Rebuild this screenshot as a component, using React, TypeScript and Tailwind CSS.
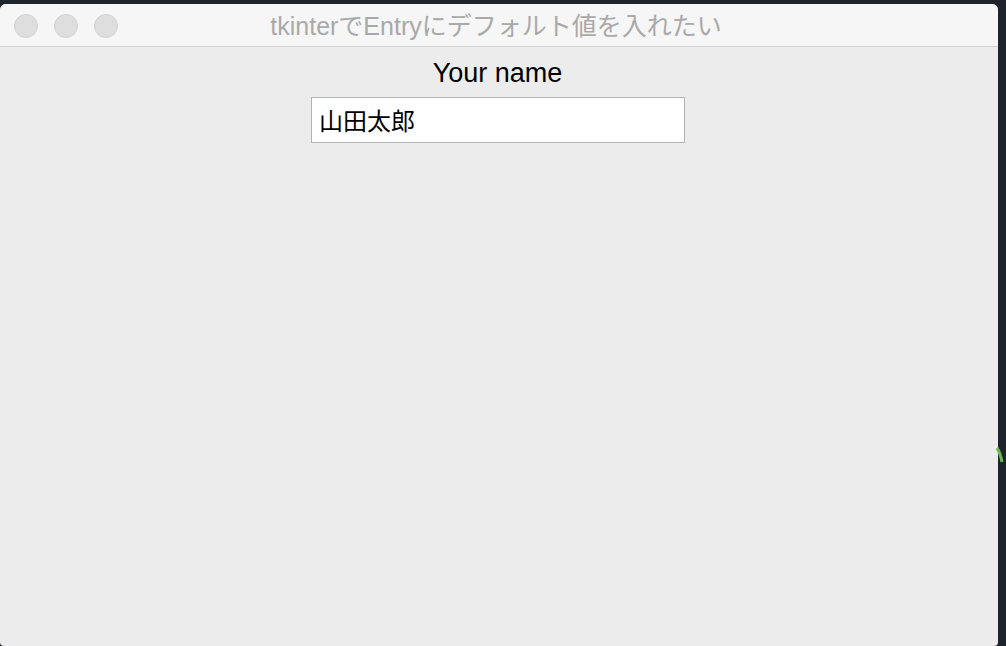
import React from "react";

export default function App() {
  return (
    <div className="relative w-[1006px] h-[646px] bg-[#1f232b] overflow-hidden pt-[4px]">
      <div className="w-[998px] h-[642px] bg-[#ececec] rounded-t-[6px] rounded-b-[4px] overflow-hidden flex flex-col">
        <div className="relative h-[43px] bg-[#f6f6f6] border-b border-[#d1d1d1] flex items-center justify-center shrink-0">
          <div className="absolute left-[14px] top-[10px] flex gap-[16px]">
            <div className="w-[24px] h-[24px] rounded-full bg-[#dedede] border border-[#d2d2d2]" />
            <div className="w-[24px] h-[24px] rounded-full bg-[#dedede] border border-[#d2d2d2]" />
            <div className="w-[24px] h-[24px] rounded-full bg-[#dedede] border border-[#d2d2d2]" />
          </div>
          <span
            className="text-[25px] text-[#a9a9a9] leading-none ml-[-6px] mt-[2px]"
            style={{ fontFamily: '"Liberation Sans", "Noto Sans CJK JP", sans-serif' }}
          >
            tkinterでEntryにデフォルト値を入れたい
          </span>
        </div>
        <div
          className="flex flex-col items-center pt-[10px]"
          style={{ fontFamily: '"Liberation Sans", "Noto Sans CJK JP", sans-serif' }}
        >
          <div className="text-[27px] leading-[32px] text-black ml-[-3px]">Your name</div>
          <div className="mt-[8px] ml-[-2px] w-[374px] h-[46px] bg-white border border-[#b3b3b3] flex items-center px-[7px] pt-[3px] text-[24px] text-black">
            山田太郎
          </div>
        </div>
      </div>
      <svg className="absolute left-[996px] top-[446px]" width="10" height="20" viewBox="0 0 10 20">
        <path d="M1 2 Q4 6 6 16" stroke="#6db85a" strokeWidth="3" fill="none" />
      </svg>
    </div>
  );
}
